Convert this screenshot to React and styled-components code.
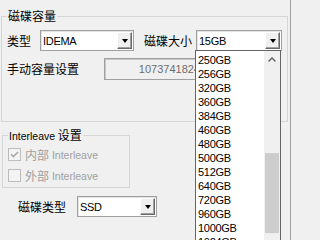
import React from 'react';
import styled, { createGlobalStyle } from 'styled-components';

const GlobalStyle = createGlobalStyle`
  html, body {
    margin: 0;
    padding: 0;
    background: #f0f0f0;
  }
  body {
    font-family: "Noto Sans CJK SC", "Liberation Sans", sans-serif;
    font-size: 12px;
    color: #000;
  }
`;

const Frame = styled.div`
  position: relative;
  width: 291px;
  height: 240px;
  box-sizing: border-box;
  padding-left: 1px;
  border-right: 1px solid #a0a0a0;
  overflow: hidden;
`;

const Group = styled.fieldset`
  box-sizing: border-box;
  width: ${props => props.$width}px;
  margin: ${props => props.$margin || '0'};
  padding: ${props => props.$padding};
  border: 1px solid #d5d5d5;
  border-radius: 0;
`;

const Legend = styled.legend`
  padding: 0 1px;
  height: 14px;
  line-height: 14px;
  font-size: 12px;
  color: #000;
`;

const Latin = styled.span`
  font-family: "Liberation Sans", sans-serif;
  font-size: 10.5px;
`;

const Row = styled.div`
  display: flex;
  align-items: center;
  height: ${props => props.$height || 21}px;
  margin-top: ${props => props.$top || 0}px;
  margin-left: ${props => props.$left || 0}px;
`;

const Label = styled.span`
  display: block;
  flex: none;
  width: ${props => props.$width}px;
  margin-left: ${props => props.$left || 0}px;
  font-size: 12px;
  line-height: 14px;
  white-space: nowrap;
`;

const ComboBox = styled.div`
  flex: none;
  box-sizing: border-box;
  display: flex;
  align-items: center;
  width: ${props => props.$width}px;
  height: 21px;
  background: #fff;
  border: 1px solid #a0a0a0;
  box-shadow: inset 1px 1px 0 #e3e3e3;
`;

const ComboValue = styled.span`
  flex: 1;
  padding-left: 2px;
  font-family: "Liberation Sans", sans-serif;
  font-size: 11px;
  letter-spacing: -0.3px;
  line-height: 14px;
  white-space: nowrap;
  overflow: hidden;
`;

const ComboButton = styled.span`
  flex: none;
  box-sizing: border-box;
  display: flex;
  align-items: center;
  justify-content: center;
  width: 15px;
  height: 17px;
  margin-right: 1px;
  background: #f0f0f0;
  border-top: 1px solid #fff;
  border-left: 1px solid #fff;
  border-right: 1px solid #696969;
  border-bottom: 1px solid #696969;
  box-shadow: inset -1px -1px 0 #a0a0a0;
`;

const Arrow = styled.span`
  width: 0;
  height: 0;
  border-left: 3.5px solid transparent;
  border-right: 3.5px solid transparent;
  border-top: 4px solid #000;
  margin-top: 1px;
`;

const TextField = styled.div`
  flex: none;
  box-sizing: border-box;
  width: 100px;
  height: 22px;
  padding-right: 3px;
  display: flex;
  align-items: center;
  justify-content: flex-end;
  background: #f0f0f0;
  border: 1px solid #a0a0a0;
  box-shadow: inset 1px 1px 0 #c8c8c8;
  font-family: "Liberation Sans", sans-serif;
  font-size: 11px;
  color: #6d6d6d;
`;

const CheckRow = styled.div`
  display: flex;
  align-items: center;
  height: 13px;
  margin-top: ${props => props.$top || 0}px;
  color: #a0a0a0;
  font-size: 12px;
  white-space: nowrap;
`;

const CheckBox = styled.span`
  flex: none;
  box-sizing: border-box;
  width: 13px;
  height: 13px;
  margin-right: 4px;
  border: 1px solid #bcbcbc;
  background: #f4f4f4;
  display: flex;
  align-items: center;
  justify-content: center;
`;

const DropList = styled.div`
  position: absolute;
  left: 195px;
  top: 50px;
  box-sizing: border-box;
  width: 86px;
  height: 200px;
  display: flex;
  background: #fff;
  border: 1px solid #646464;
`;

const Items = styled.div`
  flex: 1;
  padding-top: 2px;
`;

const Item = styled.div`
  height: 14px;
  line-height: 14px;
  padding-left: 2px;
  font-family: "Liberation Sans", sans-serif;
  font-size: 11px;
  letter-spacing: -0.3px;
  white-space: nowrap;
`;

const ScrollBar = styled.div`
  flex: none;
  width: 16px;
  background: #f0f0f0;
  display: flex;
  flex-direction: column;
  align-items: stretch;
`;

const ScrollArrow = styled.div`
  height: 17px;
  display: flex;
  align-items: center;
  justify-content: center;
`;

const Thumb = styled.div`
  margin: ${props => props.$offset}px 1px 0;
  height: ${props => props.$size}px;
  background: #cdcdcd;
`;

const sizes = [
  '250GB', '256GB', '320GB', '360GB', '384GB', '460GB', '480GB',
  '500GB', '512GB', '640GB', '720GB', '960GB', '1000GB', '1024GB',
];

const Combo = ({ width, value }) => (
  <ComboBox $width={width}>
    <ComboValue>{value}</ComboValue>
    <ComboButton><Arrow /></ComboButton>
  </ComboBox>
);

export default function App() {
  return (
    <>
      <GlobalStyle />
      <Frame>
        <Group $width={286} $margin="9px 0 0 0" $padding="7px 5px 41px 5px">
          <Legend>磁碟容量</Legend>
          <Row>
            <Label $width={33}>类型</Label>
            <Combo width={94} value="IDEMA" />
            <Label $width={52} $left={10}>磁碟大小</Label>
            <Combo width={86} value="15GB" />
          </Row>
          <Row $top={7} $height={22}>
            <Label $width={97}>手动容量设置</Label>
            <TextField>1073741824</TextField>
          </Row>
        </Group>

        <Group $width={128} $margin="6px 0 0 1px" $padding="6px 5px 5px 5px">
          <Legend><Latin>Interleave</Latin> 设置</Legend>
          <CheckRow>
            <CheckBox>
              <svg width="9" height="9" viewBox="0 0 9 9">
                <path d="M1 4.2 L3.4 6.6 L8 2" fill="none" stroke="#a8a8a8" strokeWidth="1.6" />
              </svg>
            </CheckBox>
            内部 <Latin>&nbsp;Interleave</Latin>
          </CheckRow>
          <CheckRow $top={8}>
            <CheckBox />
            外部 <Latin>&nbsp;Interleave</Latin>
          </CheckRow>
        </Group>

        <Row $top={8} $left={17}>
          <Label $width={59}>磁碟类型</Label>
          <Combo width={80} value="SSD" />
        </Row>

        <DropList>
          <Items>
            {sizes.map(s => <Item key={s}>{s}</Item>)}
          </Items>
          <ScrollBar>
            <ScrollArrow>
              <svg width="8" height="5" viewBox="0 0 8 5">
                <path d="M0.5 4.5 L4 1 L7.5 4.5" fill="none" stroke="#606060" strokeWidth="1.4" />
              </svg>
            </ScrollArrow>
            <Thumb $offset={85} $size={80} />
          </ScrollBar>
        </DropList>
      </Frame>
    </>
  );
}
